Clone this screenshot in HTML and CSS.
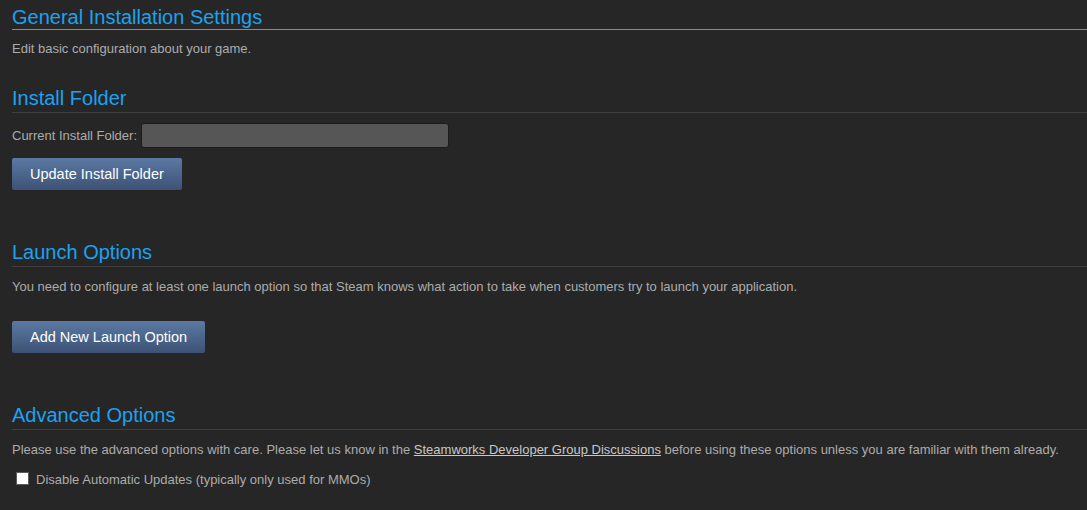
FILE: index.html
```html
<!DOCTYPE html>
<html>
<head>
<meta charset="utf-8">
<link rel="stylesheet" href="styles.css">
</head>
<body>
<div class="page">
  <section class="sec sec-general">
    <h2 class="heading heading-main">General Installation Settings</h2>
    <p class="desc">Edit basic configuration about your game.</p>
  </section>

  <section class="sec sec-folder">
    <h2 class="heading">Install Folder</h2>
    <div class="field-row">
      <label class="field-label">Current Install Folder:</label>
      <div class="field-input"></div>
    </div>
    <button class="btn">Update Install Folder</button>
  </section>

  <section class="sec sec-launch">
    <h2 class="heading">Launch Options</h2>
    <p class="desc">You need to configure at least one launch option so that Steam knows what action to take when customers try to launch your application.</p>
    <button class="btn btn-launch">Add New Launch Option</button>
  </section>

  <section class="sec sec-advanced">
    <h2 class="heading">Advanced Options</h2>
    <p class="desc">Please use the advanced options with care. Please let us know in the <a class="link" href="#">Steamworks Developer Group Discussions</a> before using these options unless you are familiar with them already.</p>
    <label class="check-row"><span class="checkbox"></span><span class="check-label">Disable Automatic Updates (typically only used for MMOs)</span></label>
  </section>
</div>
</body>
</html>
```

FILE: styles.css
```css
html, body {
  margin: 0;
  padding: 0;
  background: #262626;
}
body {
  font-family: "Liberation Sans", Arial, sans-serif;
  color: #acacac;
  font-size: 13px;
  overflow: hidden;
}
.page {
  padding-left: 12px;
}
.sec {
  display: flex;
  flex-direction: column;
  align-items: flex-start;
}
.heading {
  align-self: stretch;
  margin: 0;
  font-weight: normal;
  font-size: 20px;
  line-height: 24px;
  color: #1ba2f0;
  border-bottom: 1px solid #3e3e3e;
  padding-bottom: 2px;
}
.heading-main {
  margin-top: 5px;
  padding-bottom: 0;
  border-bottom-color: #8a8a8a;
}
.desc {
  margin: 12px 0 0;
  line-height: 16px;
}
.sec-general .desc {
  margin-top: 11px;
}
.sec-folder {
  margin-top: 29px;
}
.field-row {
  display: flex;
  align-items: center;
  margin-top: 10px;
  gap: 4px;
}
.field-label {
  line-height: 16px;
}
.field-input {
  width: 306px;
  height: 23px;
  background: #565656;
  border: 1px solid #1c1c1c;
  border-radius: 3px;
}
.btn {
  margin-top: 10px;
  height: 32px;
  padding: 0 18px;
  border: none;
  border-radius: 2px;
  background: linear-gradient(to bottom, #5b79a3 0%, #3d5275 100%);
  color: #ffffff;
  font-family: "Liberation Sans", Arial, sans-serif;
  font-size: 14.5px;
}
.sec-launch {
  margin-top: 50px;
}
.btn-launch {
  margin-top: 26px;
}
.sec-advanced {
  margin-top: 50px;
}
.link {
  color: #c8c8c8;
  text-decoration: underline;
}
.check-row {
  display: flex;
  align-items: flex-start;
  gap: 7px;
  margin-top: 14px;
  margin-left: 4px;
}
.checkbox {
  width: 11px;
  height: 11px;
  background: #ffffff;
  border: 1px solid #5a5a5a;
}
.check-label {
  line-height: 16px;
}
```
